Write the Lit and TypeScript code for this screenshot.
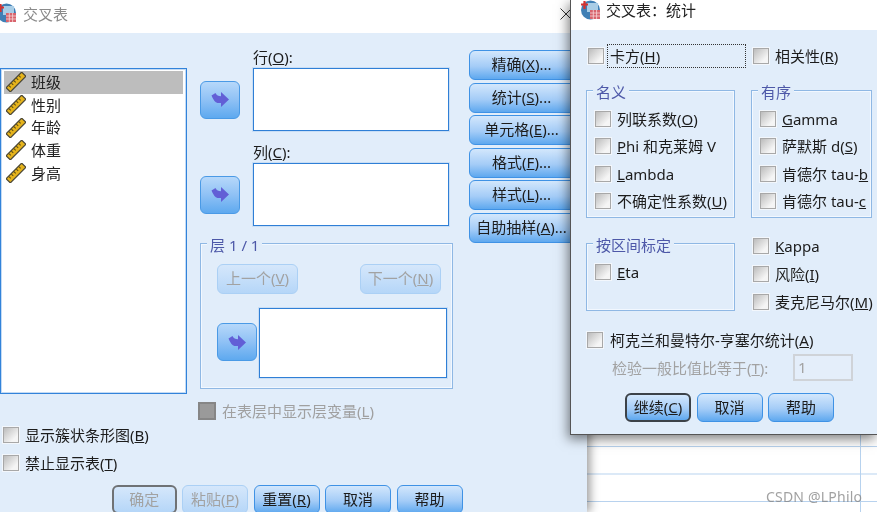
import { LitElement, html, css, svg } from "lit";
import { customElement } from "lit/decorators.js";

const ruler = html`<svg class="ruler" viewBox="0 0 20 20" width="20" height="20">
  <g transform="rotate(-45 10 10)">
    <rect x="-1" y="7" width="22" height="6" fill="#e6b41c" stroke="#4a4636" stroke-width="1.2"/>
    ${[2.5, 6, 9.5, 13, 16.5].map((x) => svg`<path d="M${x} 7.5v2.6" stroke="#5b4c14" stroke-width="1"/>`)}
  </g>
</svg>`;

const arrow = html`<svg class="arw" viewBox="0 0 18 15" width="18" height="15">
  <path d="M10 0L18 7.5L10 15V11H6.5Q3 10 0.5 3.5L4.5 1Q6 4.2 10 4.2Z" fill="#625fd6"/>
</svg>`;

const appIcon = html`<svg class="appicon" viewBox="0 0 20 20" width="20" height="20">
  <circle cx="9.5" cy="10" r="9.5" fill="#3f7fb5"/>
  <rect x="6" y="3" width="11" height="9" fill="#a9cde6"/>
  <path d="M0 4.5H7M3.5 1V9" stroke="#d5322f" stroke-width="2.2"/>
  <rect x="9" y="10" width="10" height="9" fill="#d8636c"/>
  <path d="M9 13H19M9 16H19M12.3 10V19M15.6 10V19" stroke="#f6d5d8" stroke-width=".8"/>
</svg>`;

const closeX = html`<svg class="closex" viewBox="0 0 12 12" width="12" height="12">
  <path d="M.5 .5L11.5 11.5M11.5 .5L.5 11.5" stroke="#333" stroke-width="1" fill="none"/>
</svg>`;

@customElement("app-root")
export class AppRoot extends LitElement {
  static styles = css`
    :host {
      display: block;
      position: relative;
      width: 877px;
      height: 512px;
      overflow: hidden;
      background: #fff;
      font: 15px/20px "Noto Sans", "Noto Sans CJK SC", sans-serif;
      color: #1c1c1c;
      filter: blur(0.3px);
    }
    u { text-underline-offset: 1px; text-decoration-thickness: 1px; }
    .sheet {
      position: absolute; left: 587px; top: 435px; width: 290px; height: 77px;
      background-color: #fff;
      background-image:
        linear-gradient(to right, #b7d2ee 1px, transparent 1px),
        linear-gradient(to bottom, #b7d2ee 1px, transparent 1px);
      background-size: 94px 27.5px;
      background-position: 85px 11px;
    }
    .win {
      position: absolute; top: 0; display: flex; flex-direction: column;
      background: #e1edfa; box-sizing: border-box;
    }
    .left { left: 0; width: 587px; height: 512px; box-shadow: 3px 0 9px rgba(0,0,0,.4); }
    .right {
      left: 570px; width: 307px; height: 435px;
      border-left: 1px solid #555; border-bottom: 1px solid #555;
      box-shadow: -2px 4px 11px rgba(0,0,0,.5);
    }
    .title { display: flex; align-items: flex-start; background: #fff; flex: none; position: relative; }
    .left .title { height: 33px; color: #8a8a8a; }
    .right .title { height: 30px; color: #222; }
    .left .appicon { margin: 3px 4px 0 -3px; flex: none; }
    .right .appicon { margin: 0 5px 0 10px; flex: none; }
    .left .tt { margin: 4px 0 0 2px; }
    .right .tt { margin-top: 0; }
    .left .closex { position: absolute; left: 560px; top: 8px; }
    .right .closex { position: absolute; left: 319px; top: 5px; }
    /* left dialog */
    .top { display: flex; padding-top: 17px; }
    .listbox {
      width: 187px; height: 326px; margin-top: 18px; box-sizing: border-box;
      border: 1px solid #3283da; box-shadow: inset 0 0 0 1px #c4dbf4;
      background: #fff; padding: 2px 3px; flex: none;
    }
    .var { display: flex; align-items: center; height: 22.7px; padding-left: 2px; color: #222; }
    .var.sel { background: #bdbdbd; }
    .var span { margin-top: -1px; }
    .var .ruler { flex: none; margin-right: 5px; }
    .mid { width: 253px; margin-left: 13px; flex: none; }
    .target { display: flex; gap: 13px; }
    .target + .target { margin-top: 14px; }
    .target .arrowbtn { margin-top: 30.5px; }
    .lbl { line-height: 14px; height: 18px; }
    .box {
      background: #fff; border: 1px solid #2f7fd6; box-shadow: 0 0 0 1px #c9def5;
      box-sizing: border-box; flex: none;
    }
    .target .box { width: 196px; height: 63px; }
    .arrowbtn {
      width: 40px; height: 38px; box-sizing: border-box; flex: none; padding: 0;
      border: 1px solid #4a9ae6; border-radius: 6px;
      background: linear-gradient(#b6d8fa, #8fc1f5 50%, #5ea9ef);
      display: flex; align-items: center; justify-content: center;
    }
    .group {
      border: 1px solid #8fb8e4; box-shadow: 0 0 0 1px #f2f8ff inset;
      box-sizing: border-box; position: relative;
    }
    .legend {
      position: absolute; left: 6px; top: -9px; line-height: 20px;
      background: #e1edfa; padding: 0 3px; color: #4d58a8;
    }
    .layer { height: 146px; margin-top: 17px; padding: 20px 11px 0 16px; }
    .layer .nav { display: flex; justify-content: space-between; }
    .layer .lower { display: flex; gap: 2px; margin-top: 14px; }
    .layer .lower .arrowbtn { margin-top: 15px; }
    .layer .box { width: 188px; height: 70px; }
    .btn {
      box-sizing: border-box; height: 29px; padding: 0 0 2px; font: inherit; color: #1c1c1c;
      border: 1px solid #3f92e5; border-radius: 6px; white-space: nowrap;
      background: linear-gradient(#d3e7fc, #a4ccf7 55%, #5ea8ef);
      display: flex; align-items: center; justify-content: center;
    }
    .btn.off {
      border-color: #abd0f5; color: #a2a2a2;
      background: linear-gradient(#d5e7fb, #b5d6f8);
    }
    .btn.dflt { border: 2px solid #3c4248; }
    .btn.dflt.off { border-color: #6f7275; }
    .layer .btn { width: 81px; height: 30px; }
    .side { display: flex; flex-direction: column; gap: 2.6px; margin-left: 16px; flex: none; }
    .side .btn { width: 118px; height: 30px; padding-right: 13px; }
    .cb {
      width: 16px; height: 16px; box-sizing: border-box; flex: none; display: block;
      border: 1px solid #a8a8a8; outline: 1px solid #f3f7fc;
      background: linear-gradient(135deg, #bcbcbc, #f5f5f5 75%);
    }
    .cb.dis { width: 18px; height: 18px; border: 2px solid #868686; background: #9a9a9a; outline: none; }
    .chk { display: flex; align-items: center; gap: 6px; height: 28px; white-space: nowrap; }
    .showlayer { height: 21px; margin-top: 11px; margin-left: -2px; color: #a0a0a0; }
    .opts { padding-left: 3px; }
    .bottom { display: flex; gap: 5.5px; padding: 8px 0 0 112px; }
    .bottom .btn { width: 66px; }
    .bottom .btn:first-child { width: 64.5px; }
    /* right dialog */
    .r-first { display: flex; align-items: center; height: 24px; padding: 14px 0 0 17px; }
    .focus {
      width: 139px; height: 24px; box-sizing: border-box; margin-left: 3px;
      border: 1px dotted #333; padding-left: 2px; line-height: 22px;
    }
    .r-first > .chk { margin-left: 7px; }
    .r-groups { display: flex; gap: 16px; padding-left: 15px; margin-top: 22px; }
    .g1 { width: 149px; }
    .g2 { width: 121px; }
    .r-groups .group { height: 128px; padding: 14.4px 0 0 8px; }
    .r-groups .chk, .interval .chk { height: 27.3px; }
    .r-lower { display: flex; padding-left: 15px; margin-top: 14px; height: 84px; }
    .interval { width: 149px; height: 68px; margin-top: 11px; padding: 14.4px 0 0 8px; flex: none; }
    .r-side { margin-left: 18px; }
    .cochran { height: 24px; margin-top: 12px; padding-left: 16px; gap: 7px; }
    .ratio { display: flex; align-items: center; margin-top: 2px; padding-left: 41px; color: #a2a2a2; }
    .ratio .t { width: 181px; }
    .ratio .inp {
      width: 60px; height: 27px; box-sizing: border-box; border: 2px solid #cfd3d8;
      padding-left: 3px; line-height: 23px; background: #e4eefa;
    }
    .r-btns { display: flex; gap: 5.5px; margin-top: 12px; padding-left: 54px; }
    .r-btns .btn { width: 66px; }
    .mark {
      position: absolute; left: 766px; top: 487px; font-size: 14px; color: rgba(130,130,130,.75);
      font-family: "Noto Sans", sans-serif; letter-spacing: .2px; white-space: nowrap;
    }
  `;

  chk(label: unknown) {
    return html`<label class="chk"><span class="cb"></span><span>${label}</span></label>`;
  }

  render() {
    const vars = ["班级", "性别", "年龄", "体重", "身高"];
    const side: [string, string][] = [
      ["精确", "X"], ["统计", "S"], ["单元格", "E"], ["格式", "F"], ["样式", "L"], ["自助抽样", "A"],
    ];
    return html`
      <div class="sheet"></div>
      <section class="win left">
        <div class="title">${appIcon}<span class="tt">交叉表</span>${closeX}</div>
        <div class="top">
          <div class="listbox">
            ${vars.map((v, i) => html`<div class="var ${i === 0 ? "sel" : ""}">${ruler}<span>${v}</span></div>`)}
          </div>
          <div class="mid">
            <div class="target">
              <button class="arrowbtn">${arrow}</button>
              <div><div class="lbl">行(<u>O</u>):</div><div class="box"></div></div>
            </div>
            <div class="target">
              <button class="arrowbtn">${arrow}</button>
              <div><div class="lbl">列(<u>C</u>):</div><div class="box"></div></div>
            </div>
            <div class="group layer">
              <span class="legend">层 1 / 1</span>
              <div class="nav">
                <button class="btn off">上一个(<u>V</u>)</button>
                <button class="btn off">下一个(<u>N</u>)</button>
              </div>
              <div class="lower">
                <button class="arrowbtn">${arrow}</button>
                <div class="box"></div>
              </div>
            </div>
            <label class="chk showlayer"><span class="cb dis"></span><span>在表层中显示层变量(<u>L</u>)</span></label>
          </div>
          <div class="side">
            ${side.map(([t, k]) => html`<button class="btn">${t}(<u>${k}</u>)...</button>`)}
          </div>
        </div>
        <div class="opts">
          ${this.chk(html`显示簇状条形图(<u>B</u>)`)}
          ${this.chk(html`禁止显示表(<u>T</u>)`)}
        </div>
        <div class="bottom">
          <button class="btn off dflt">确定</button>
          <button class="btn off">粘贴(<u>P</u>)</button>
          <button class="btn">重置(<u>R</u>)</button>
          <button class="btn">取消</button>
          <button class="btn">帮助</button>
        </div>
      </section>

      <section class="win right">
        <div class="title">${appIcon}<span class="tt">交叉表：统计</span>${closeX}</div>
        <div class="r-first">
          <span class="cb"></span>
          <div class="focus">卡方(<u>H</u>)</div>
          ${this.chk(html`相关性(<u>R</u>)`)}
        </div>
        <div class="r-groups">
          <div class="group g1">
            <span class="legend">名义</span>
            ${this.chk(html`列联系数(<u>O</u>)`)}
            ${this.chk(html`<u>P</u>hi 和克莱姆 V`)}
            ${this.chk(html`<u>L</u>ambda`)}
            ${this.chk(html`不确定性系数(<u>U</u>)`)}
          </div>
          <div class="group g2">
            <span class="legend">有序</span>
            ${this.chk(html`<u>G</u>amma`)}
            ${this.chk(html`萨默斯 d(<u>S</u>)`)}
            ${this.chk(html`肯德尔 tau-<u>b</u>`)}
            ${this.chk(html`肯德尔 tau-<u>c</u>`)}
          </div>
        </div>
        <div class="r-lower">
          <div class="group interval">
            <span class="legend">按区间标定</span>
            ${this.chk(html`<u>E</u>ta`)}
          </div>
          <div class="r-side">
            ${this.chk(html`<u>K</u>appa`)}
            ${this.chk(html`风险(<u>I</u>)`)}
            ${this.chk(html`麦克尼马尔(<u>M</u>)`)}
          </div>
        </div>
        <label class="chk cochran"><span class="cb"></span><span>柯克兰和曼特尔-亨塞尔统计(<u>A</u>)</span></label>
        <div class="ratio"><span class="t">检验一般比值比等于(<u>T</u>):</span><span class="inp">1</span></div>
        <div class="r-btns">
          <button class="btn dflt">继续(<u>C</u>)</button>
          <button class="btn">取消</button>
          <button class="btn">帮助</button>
        </div>
      </section>
      <div class="mark">CSDN @LPhilo</div>
    `;
  }
}
